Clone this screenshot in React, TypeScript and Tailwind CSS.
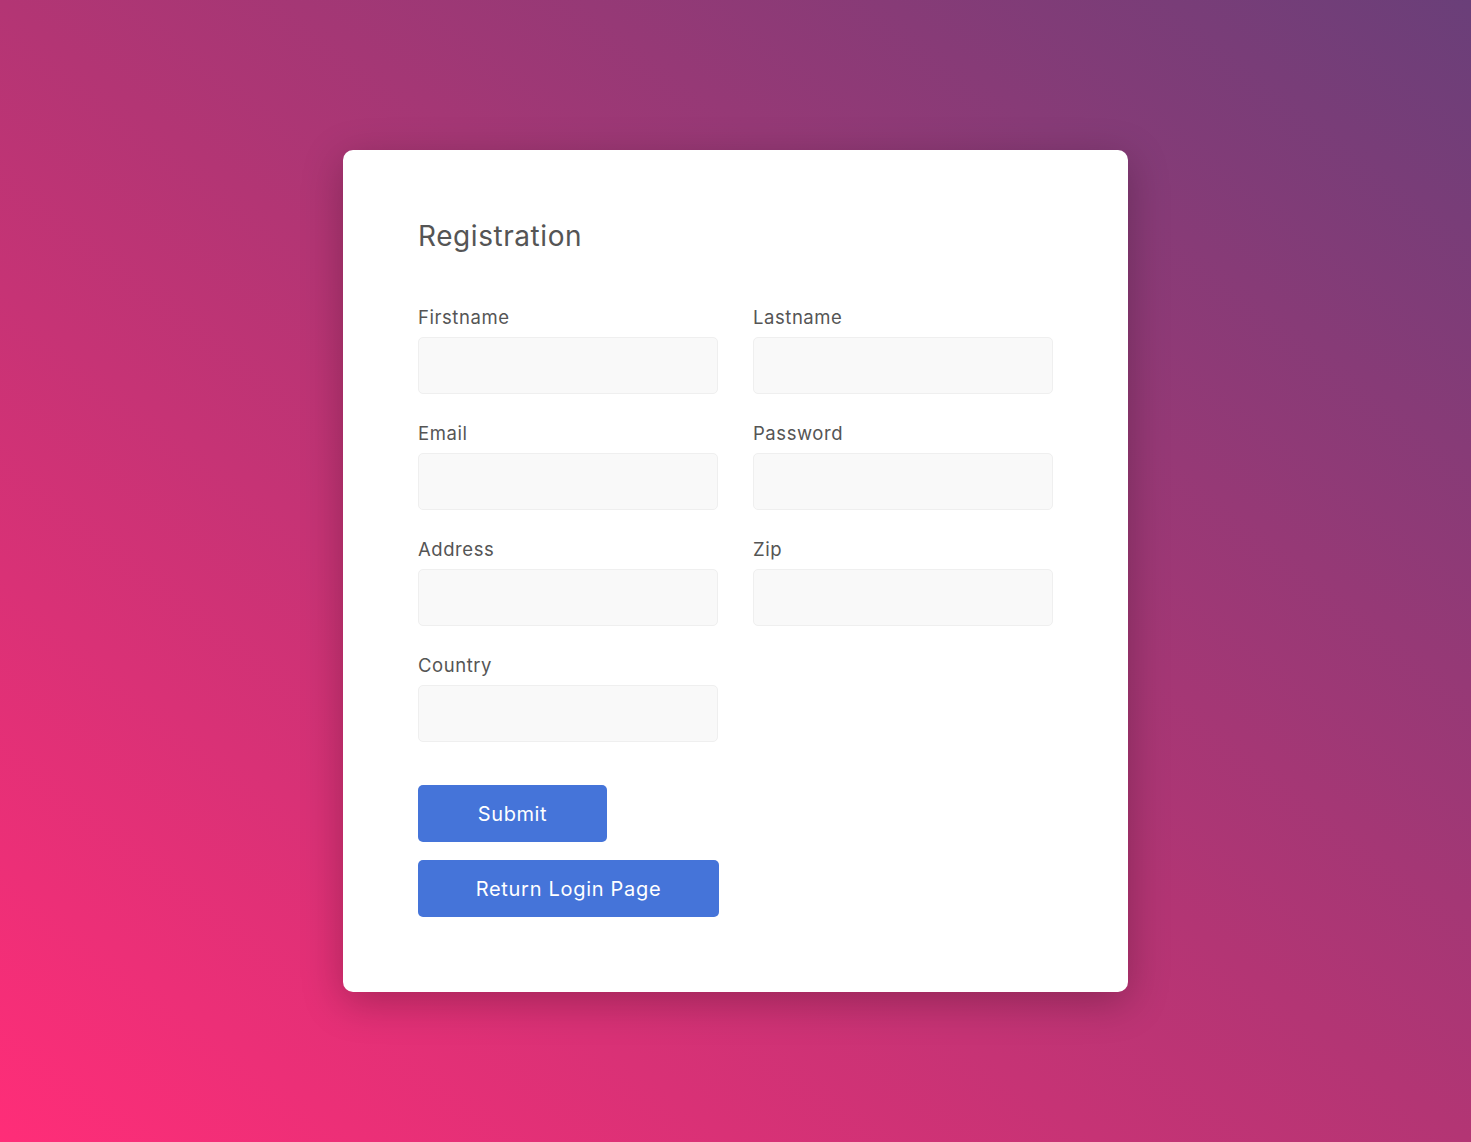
const FIELDS = ['Firstname', 'Lastname', 'Email', 'Password', 'Address', 'Zip', 'Country']

function Field({ label }: { label: string }) {
  return (
    <div className="flex flex-col">
      <label className="text-[18.5px] leading-[26px] tracking-[0.03em] text-[#555]">{label}</label>
      <input
        type={label === 'Password' ? 'password' : 'text'}
        className="mt-[7px] h-[57px] w-[300px] rounded-[5px] border border-[#efefef] bg-[#f9f9f9] px-3 outline-none"
      />
    </div>
  )
}

export default function App() {
  return (
    <div
      className="flex min-h-screen items-start justify-center bg-[linear-gradient(to_top_right,#ff2d78,#b33574_50%,#6a3f79)] pt-[150px] pb-[150px]"
      style={{ fontFamily: "Inter, 'Noto Sans', sans-serif" }}
    >
      <div className="w-[785px] rounded-[10px] bg-white px-[75px] pt-[67px] pb-[75px] shadow-[0_10px_40px_rgba(0,0,0,0.25)]">
        <h2 className="text-[28px] leading-[38px] font-normal tracking-[0.02em] text-[#555]">Registration</h2>

        <form className="mt-[49px]" onSubmit={e => e.preventDefault()}>
          <div className="grid grid-cols-[300px_300px] gap-x-[35px] gap-y-[26px]">
            {FIELDS.map(f => <Field key={f} label={f} />)}
          </div>

          <div className="mt-[43px] flex flex-col items-start gap-[18px]">
            <button className="h-[57px] w-[189px] rounded-[5px] bg-[#4574d9] text-[20px] tracking-[0.03em] text-white">
              Submit
            </button>
            <button type="button" className="h-[57px] w-[301px] rounded-[5px] bg-[#4574d9] text-[20px] tracking-[0.035em] text-white">
              Return Login Page
            </button>
          </div>
        </form>
      </div>
    </div>
  )
}
